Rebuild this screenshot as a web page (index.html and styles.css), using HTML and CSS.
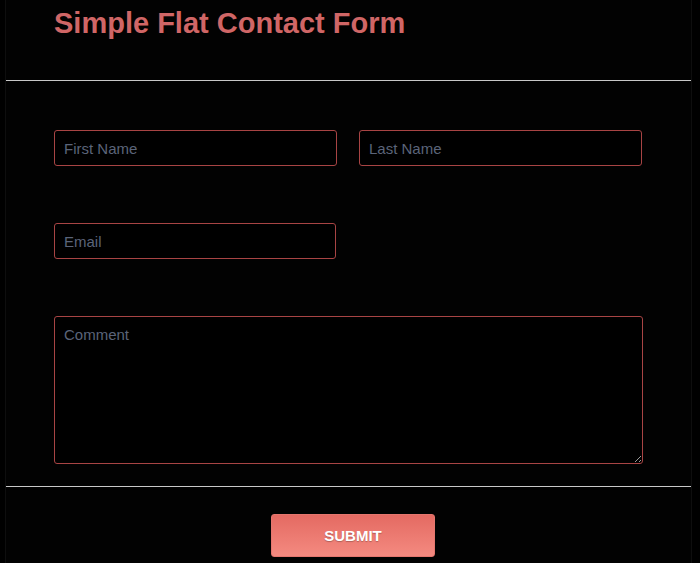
FILE: index.html
```html
<!DOCTYPE html>
<html>
<head>
<meta charset="utf-8">
<link rel="stylesheet" href="styles.css">
</head>
<body>
<div class="page">
  <h1 class="title">Simple Flat Contact Form</h1>
  <hr class="rule">
  <form class="form">
    <div class="row two">
      <input class="field" type="text" placeholder="First Name">
      <input class="field" type="text" placeholder="Last Name">
    </div>
    <div class="row two">
      <input class="field email" type="email" placeholder="Email">
    </div>
    <div class="row">
      <textarea class="field comment" placeholder="Comment"></textarea>
    </div>
  </form>
  <hr class="rule">
  <div class="actions">
    <button class="submit" type="button">SUBMIT</button>
  </div>
</div>
</body>
</html>
```
FILE: styles.css
```css
html, body {
  margin: 0;
  padding: 0;
  background: #000;
  font-family: "Liberation Sans", Arial, sans-serif;
}
.page {
  margin: 0 8px 0 5px;
  min-height: 563px;
  border-left: 1px solid #0e0e0e;
  border-right: 1px solid #0e0e0e;
  background: #020202;
  box-sizing: border-box;
}
.title {
  margin: 0;
  padding: 6px 0 0 48px;
  font-size: 29px;
  line-height: 34px;
  font-weight: bold;
  color: #d06666;
  height: 80px;
  box-sizing: border-box;
}
.rule {
  margin: 0;
  border: 0;
  height: 1px;
  background: #c8c8c8;
}
.form {
  padding: 49px 48px 22px 48px;
  display: flex;
  flex-direction: column;
  gap: 57px;
}
.row {
  display: flex;
}
.row.two {
  gap: 22px;
}
.field {
  box-sizing: border-box;
  width: 283px;
  height: 36px;
  background: #000;
  border: 1px solid #a84444;
  border-radius: 3px;
  padding: 0 9px;
  font-family: "Liberation Sans", Arial, sans-serif;
  font-size: 15px;
  color: #ccc;
  outline: none;
}
.field::placeholder {
  color: #5b6479;
}
.email {
  width: 282px;
}
.comment {
  width: 589px;
  height: 148px;
  padding: 9px 9px;
  resize: vertical;
}
.actions {
  display: flex;
  justify-content: center;
  padding-top: 27px;
  padding-left: 9px;
}
.submit {
  width: 164px;
  height: 43px;
  border: 1px solid #e4766e;
  border-radius: 3px;
  background: linear-gradient(#e46a62, #f48a80);
  color: #fff;
  font-family: "Liberation Sans", Arial, sans-serif;
  font-weight: bold;
  font-size: 15px;
  text-shadow: 0 1px 1px rgba(0,0,0,0.25);
}
```
